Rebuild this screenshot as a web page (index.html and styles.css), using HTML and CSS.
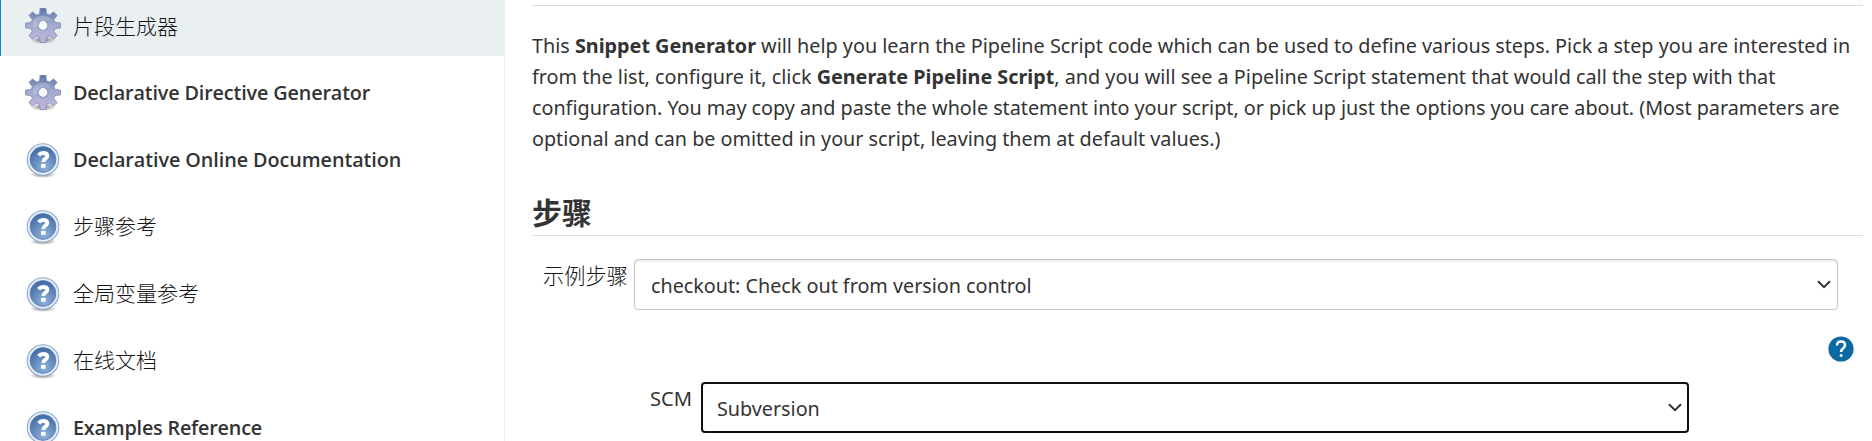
FILE: index.html
```html
<!DOCTYPE html>
<html lang="zh-CN">
<head>
<meta charset="utf-8">
<title>片段生成器</title>
<link rel="stylesheet" href="styles.css">
</head>
<body>
<svg class="defs" width="0" height="0" aria-hidden="true">
  <defs>
    <linearGradient id="gearFill" x1="0" y1="0" x2="0" y2="1">
      <stop offset="0" stop-color="#5872a5"/>
      <stop offset=".45" stop-color="#a0a9ce"/>
      <stop offset="1" stop-color="#c3b7dc"/>
    </linearGradient>
    <radialGradient id="helpFill" cx=".55" cy=".8" r=".8">
      <stop offset="0" stop-color="#8fb2da"/>
      <stop offset="1" stop-color="#3f69a5"/>
    </radialGradient>
    <radialGradient id="shade">
      <stop offset="0" stop-color="#555" stop-opacity=".8"/>
      <stop offset="1" stop-color="#555" stop-opacity="0"/>
    </radialGradient>
    <symbol id="gear" viewBox="0 0 36 36">
      <ellipse cx="18" cy="32" rx="13" ry="4" fill="url(#shade)"/>
      <path d="M15.200 0h5.600l.7 5.800 3.100 1.300 4-3.200 3.500 3.500-3.300 4 1.300 3.100 5.400.6v4.800l-5.400.6-1.300 3.100 3.300 4-3.500 3.500-4-3.200-3.100 1.300-.8 5.300h-5.400l-.8-5.300-3.100-1.300-4 3.200L4 27.600l3.300-4L6 20.500.5 19.900v-4.800l5.500-.6 1.300-3.100-3.300-4 3.500-3.500 4 3.200 3.100-1.300z" fill="url(#gearFill)" stroke="#8791b5" stroke-width=".9" stroke-linejoin="round"/>
      <path d="M8 17c0-6 4-9.500 9.500-9.500 4 0 7 1.500 9 4.500-8 0-12 5-18 8z" fill="#fff" opacity=".2"/>
      <circle cx="18" cy="17.500" r="5" class="gear-hole" stroke="#8f9bc0" stroke-width="1.200"/>
    </symbol>
    <symbol id="help" viewBox="0 0 36 36">
      <ellipse cx="18" cy="32.500" rx="13" ry="3.500" fill="url(#shade)"/>
      <circle cx="18" cy="17.500" r="15.800" fill="#e4edf7" stroke="#8ea8cd" stroke-width="1.100"/>
      <circle cx="18" cy="17.500" r="12.900" fill="url(#helpFill)" stroke="#5a7db2" stroke-width=".8"/>
      <path d="M13.600 13.200c1.200-1.500 2.600-2.200 4.600-2.200 2.500 0 4.100 1 4.100 3 0 2.800-4 2.600-4 5.900" fill="none" stroke="#fff" stroke-width="3.900"/>
      <rect x="16" y="21.800" width="4.600" height="4" rx=".8" fill="#fff"/>
    </symbol>
  </defs>
</svg>
<div class="page">
  <nav class="sidebar">
    <a class="task active"><svg class="icon"><use href="#gear"/></svg><span class="cjk">片段生成器</span></a>
    <a class="task"><svg class="icon"><use href="#gear"/></svg><span class="latin directive">Declarative Directive Generator</span></a>
    <a class="task"><svg class="icon"><use href="#help"/></svg><span class="latin online">Declarative Online Documentation</span></a>
    <a class="task"><svg class="icon"><use href="#help"/></svg><span class="cjk">步骤参考</span></a>
    <a class="task"><svg class="icon"><use href="#help"/></svg><span class="cjk">全局变量参考</span></a>
    <a class="task"><svg class="icon"><use href="#help"/></svg><span class="cjk">在线文档</span></a>
    <a class="task"><svg class="icon"><use href="#help"/></svg><span class="latin examples">Examples Reference</span></a>
  </nav>
  <main class="content">
    <p class="intro">
      <span class="line">This <b>Snippet Generator</b> will help you learn the Pipeline Script code which can be used to define various steps. Pick a step you are interested in</span>
      <span class="line">from the list, configure it, click <b>Generate Pipeline Script</b>, and you will see a Pipeline Script statement that would call the step with that</span>
      <span class="line tight">configuration. You may copy and paste the whole statement into your script, or pick up just the options you care about. (Most parameters are</span>
      <span class="line tight">optional and can be omitted in your script, leaving them at default values.)</span>
    </p>
    <h2 class="heading">步骤</h2>
    <div class="row">
      <label class="label">示例步骤</label>
      <div class="select"><span class="value">checkout: Check out from version control</span><svg class="chevron" viewBox="0 0 14 9"><path d="M1 1.200l6 6 6-6"/></svg></div>
    </div>
    <div class="help-row"><svg class="help-button" viewBox="0 0 26 26"><circle cx="13" cy="13" r="12.600" fill="#0b6aa2"/><path d="M9 9.500C9 7 10.700 5.500 13 5.500s4 1.500 4 3.700c0 2.900-3.900 3.300-3.900 6.700" fill="none" stroke="#fff" stroke-width="2.500"/><rect x="11.800" y="18.200" width="2.600" height="2.600" fill="#fff"/></svg></div>
    <div class="row nested">
      <label class="label scm">SCM</label>
      <div class="select focused"><span class="value">Subversion</span><svg class="chevron" viewBox="0 0 14 9"><path d="M1 1.200l6 6 6-6"/></svg></div>
    </div>
  </main>
</div>
</body>
</html>
```
FILE: styles.css
```css
* { box-sizing: border-box; }
body {
  margin: 0;
  background: #fff;
  color: #333;
  font-family: "Noto Sans", "Noto Sans CJK SC", sans-serif;
  font-size: 19.8px;
  overflow: hidden;
}
.defs { position: absolute; }
.page { display: flex; width: 1872px; height: 441px; overflow: hidden; }

.sidebar {
  width: 505px;
  flex: none;
  border-right: 1px solid #eaeff2;
}
.task {
  display: flex;
  align-items: center;
  gap: 12px;
  height: 67px;
  padding-left: 25px;
  line-height: 30px;
  white-space: nowrap;
}
.task.active {
  height: 56px;
  margin-bottom: 3px;
  margin-right: -1px;
  padding: 0 0 5px 24px;
  background: #eaeff2;
  border-left: 1px solid #0b84d8;
}
.icon { width: 36px; height: 36px; flex: none; }
.gear-hole { fill: #f7f9fb; }
.cjk {
  padding-bottom: 3px;
  color: #151515;
  font: 300 21px/30px "Noto Sans CJK SC", sans-serif;
}
.active .cjk { padding-bottom: 1px; }
.latin { font-family: "Open Sans", sans-serif; font-weight: 600; font-size: 19.8px; }
.directive { letter-spacing: -.14px; }
.online { letter-spacing: -.07px; }
.examples { letter-spacing: -.2px; }

.content { flex: none; width: 1331px; margin-left: 27px; padding-top: 5px; }
.intro {
  margin: 0;
  padding-top: 24px;
  border-top: 1px solid #ddd;
}
.line { display: block; width: max-content; height: 31px; line-height: 31px; letter-spacing: -.004px; white-space: nowrap; }
.tight { letter-spacing: -.022px; }
.heading {
  margin: 34px 0 0;
  height: 48px;
  border-bottom: 1px solid #ddd;
  font: 700 30px/47px "Noto Sans CJK SC", sans-serif;
}
.row { display: flex; padding: 23px 25px 0 11px; }
.label {
  width: 91px;
  flex: none;
  height: 34px;
  color: #151515;
  font: 300 21.2px/31px "Noto Sans CJK SC", sans-serif;
}
.select {
  flex: 1;
  display: flex;
  align-items: center;
  justify-content: space-between;
  height: 51px;
  padding: 0 6px 0 16px;
  border: 1px solid #c6c6c6;
  border-radius: 4px;
  box-shadow: inset 0 2px 2px rgba(0, 0, 0, .07);
  letter-spacing: -.02px;
  white-space: nowrap;
}
.value { padding-top: 2px; }
.chevron { width: 14px; height: 9px; margin-bottom: 1px; fill: none; stroke: #333; stroke-width: 2; }
.help-row { display: flex; justify-content: flex-end; padding: 26px 9px 0 0; }
.help-button { width: 26px; height: 26px; }
.nested { padding: 20px 174px 0 118px; }
.scm { width: 51px; color: #333; font: 400 20.2px/32px "Noto Sans", sans-serif; }
.focused { border: 2px solid #101010; padding: 0 5px 0 14px; box-shadow: none; }
```
